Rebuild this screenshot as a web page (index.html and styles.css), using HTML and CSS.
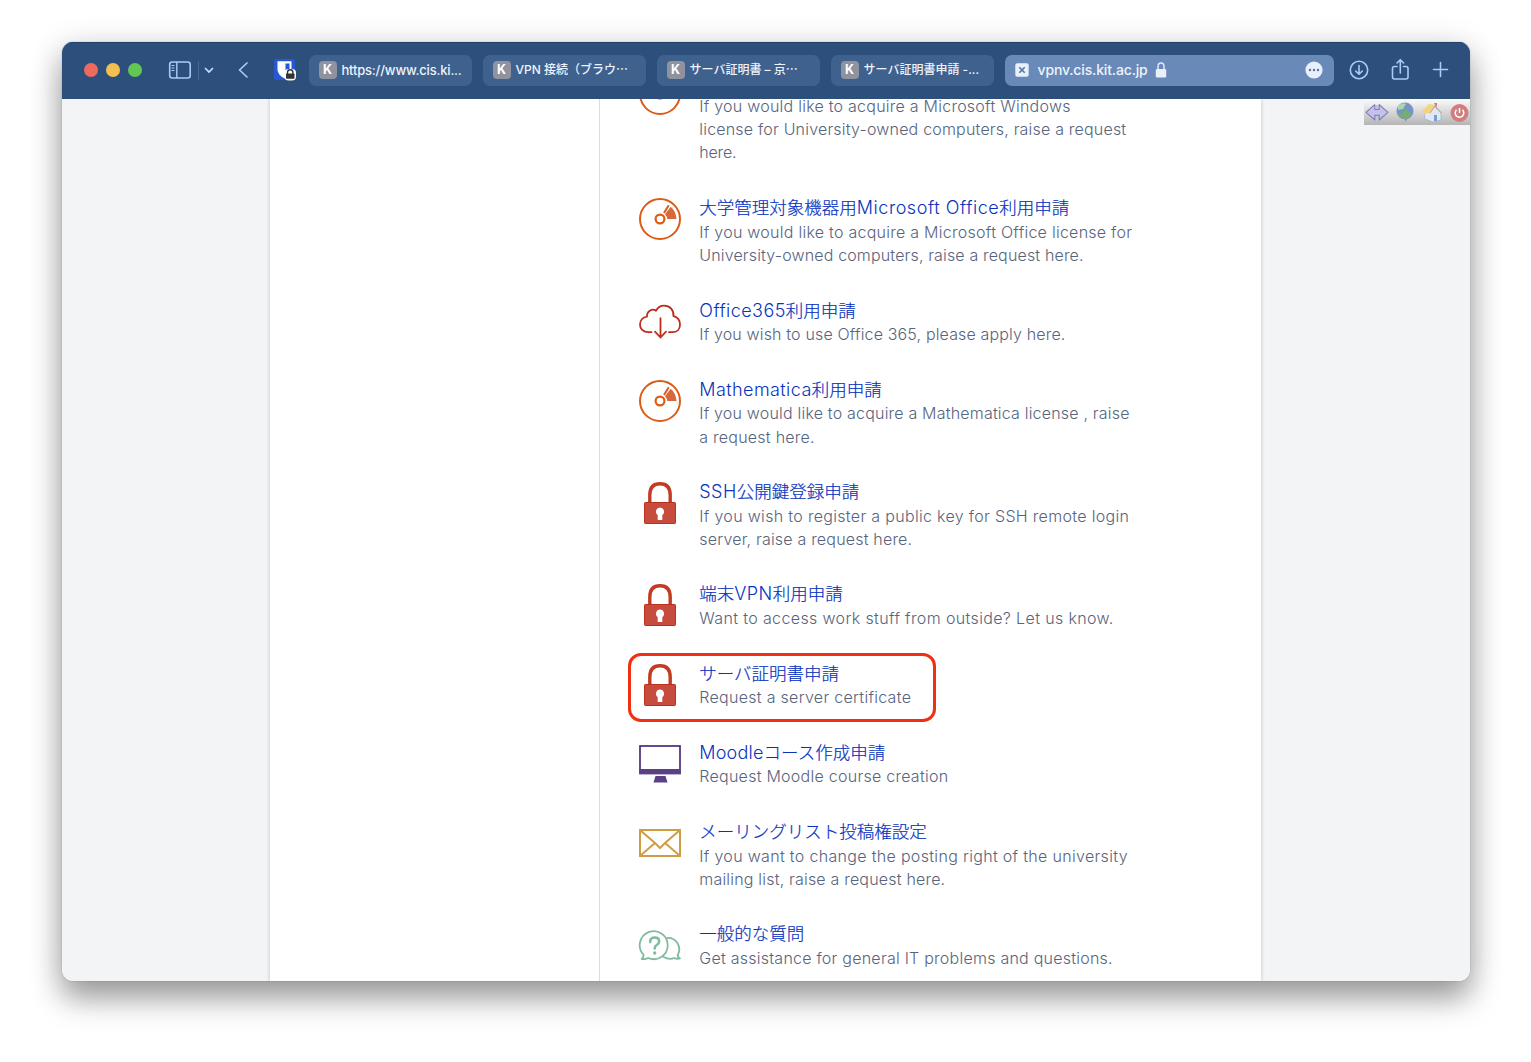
FILE: index.html
```html
<!DOCTYPE html>
<html lang="ja">
<head>
<meta charset="utf-8">
<title>vpnv.cis.kit.ac.jp</title>
<link rel="stylesheet" href="styles.css">
</head>
<body>
<svg class="defs" width="0" height="0">
  <defs>
    <symbol id="disc" viewBox="0 0 44 44">
      <g fill="none" stroke="#dc5c17" stroke-width="2">
        <circle cx="22" cy="22" r="20"/><circle cx="22" cy="22" r="4.400" stroke-width="2.200"/>
      </g>
      <path d="M27 17.300L32.700 9.700Q38 14 38.500 22H29.300Q29 19.500 27 17.300Z" fill="#d9673a"/>
      <path d="M26 16L30.700 8.200" stroke="#dc5c17" stroke-width="2"/>
    </symbol>
    <symbol id="lock" viewBox="0 0 44 44">
      <path d="M11.800 22V14Q11.800 2.700 22 2.700T32.200 14V22" fill="none" stroke="#c23b22" stroke-width="3.400"/>
      <rect x="6.500" y="21.500" width="31" height="21" rx=".8" fill="#c64d3e" stroke="#bd3019"/>
      <path d="M22 26.500a4.200 4.200 0 0 1 2.300 7.600V39H19.700V34.100A4.200 4.200 0 0 1 22 26.500Z" fill="#fff"/>
    </symbol>
  </defs>
</svg>
<div class="window">
  <header class="toolbar">
    <div class="lights"><i class="red"></i><i class="yellow"></i><i class="green"></i></div>
    <svg class="side" width="50" height="24" viewBox="0 0 50 24" fill="none" stroke="#a9cbfa">
      <rect x="1.700" y="4" width="20.500" height="16" rx="2.500" stroke-width="1.600"/>
      <path d="M8.800 4V20" stroke-width="1.400"/><path d="M3.500 7.500H6.500M3.500 10H6.500M3.500 12.500H6.500" />
      <path d="M30.500 3V22" stroke="#446693"/>
      <path d="M37.500 10.500L41 14L44.500 10.500" stroke="#c9deff" stroke-width="1.700" stroke-linecap="round"/>
    </svg>
    <svg class="back" width="12" height="18" viewBox="0 0 12 18"><path d="M10 2L2.500 9L10 16" fill="none" stroke="#a9cbfa" stroke-width="1.700" stroke-linecap="round" stroke-linejoin="round"/></svg>
    <svg class="shield" width="22" height="22" viewBox="0 0 22 22">
      <rect width="21" height="21" rx="2" fill="#2459d3"/>
      <path d="M3.500 2.200H17.500V11Q17 16 10.500 19.500Q4 16 3.500 11Z" fill="#fff"/><path d="M11.500 4.500H15.500V11Q15 14 11.500 16.500Z" fill="#2459d3"/>
      <rect x="10.500" y="10" width="11.500" height="11.500" rx="4" fill="#fff"/>
      <path d="M13.500 15V13.500a2.700 2.700 0 0 1 5.400 0V15" fill="none" stroke="#333" stroke-width="1.400"/><rect x="12" y="14.500" width="8.500" height="5.300" rx=".7" fill="#333"/>
    </svg>
    <nav class="tabs">
      <div class="tab"><b>K</b><span class="url">https://www.cis.ki...</span></div>
      <div class="tab"><b>K</b><span>VPN 接続（ブラウ<i>⋯</i></span></div>
      <div class="tab"><b>K</b><span>サーバ証明書 – 京<i>⋯</i></span></div>
      <div class="tab"><b>K</b><span>サーバ証明書申請 -...</span></div>
      <div class="tab active">
        <svg width="14" height="14" viewBox="0 0 14 14"><rect x=".3" y=".3" width="13.400" height="13.400" rx="2" fill="#e9effb"/><path d="M4.300 4.300L9.700 9.700M9.700 4.300L4.300 9.700" stroke="#53779f" stroke-width="1.600"/></svg>
        <span class="address">vpnv.cis.kit.ac.jp</span>
        <svg width="12" height="16" viewBox="0 0 12 16"><path d="M3 8V4.500a3 3.500 0 0 1 6 0V8" fill="none" stroke="#dfe9fa" stroke-width="1.500"/><rect x=".8" y="7" width="10.400" height="8.500" rx="1.300" fill="#e9effb"/></svg>
        <svg class="more" width="18" height="18" viewBox="0 0 18 18"><circle cx="9" cy="9" r="8.600" fill="#e9effb"/><g fill="#53779f"><circle cx="5" cy="9" r="1.200"/><circle cx="9" cy="9" r="1.200"/><circle cx="13" cy="9" r="1.200"/></g></svg>
      </div>
    </nav>
    <svg class="actions" width="104" height="24" viewBox="0 0 104 24" fill="none" stroke="#a9cbfa" stroke-width="1.600" stroke-linecap="round" stroke-linejoin="round">
      <circle cx="11" cy="12" r="8.700"/><path d="M11 7.500V16M7.700 13L11 16.200L14.300 13"/>
      <path d="M49 8.500H46.500Q44.500 8.500 44.500 10.500V19Q44.500 21 46.500 21H58Q60 21 60 19V10.500Q60 8.500 58 8.500H55.500M52.300 15V2M49 5L52.300 1.700L55.600 5"/>
      <path d="M85.500 11.500H99.500M92.500 4.500V18.500"/>
    </svg>
  </header>
  <main class="page">
    <div class="sheet">
      <div class="blank"></div>
      <div class="list">
        <article class="item">
          <svg class="icon"><use href="#disc"/></svg>
          <div>
          <p><span class="w25">If you would like to acquire a Microsoft Windows</span><br><span class="w20">license for University-owned computers, raise a request</span><br><span class="tight">here.</span></p></div>
        </article>
        <article class="item">
          <svg class="icon"><use href="#disc"/></svg>
          <div><h2>大学管理対象機器用<span class="latin wide">Microsoft Office</span>利用申請</h2>
          <p><span class="w26">If you would like to acquire a Microsoft Office license for</span><br><span class="w16">University-owned computers, raise a request here.</span></p></div>
        </article>
        <article class="item">
          <svg class="icon" viewBox="0 .8 44 44"><g fill="none" stroke="#bd2d1c" stroke-width="1.800" stroke-linecap="round" stroke-linejoin="round"><path d="M13.500 33H10.500C5 33 2 29.500 2 25.500C2 21 5 18 9 17.500C8.500 12.500 14 8.500 18 11.500C20 8 23 6.500 26 6.500C32 6.500 36 11 35.500 17C39.500 18 42 21.500 42 25.500C42 30 39 33 34.500 33H31"/><path d="M22.500 19V38M17 32.500L22.500 38.300L28 32.500"/></g></svg>
          <div><h2><span class="latin">Office365</span>利用申請</h2><p><span class="w16">If you wish to use Office 365, please apply here.</span></p></div>
        </article>
        <article class="item">
          <svg class="icon"><use href="#disc"/></svg>
          <div><h2><span class="latin">Mathematica</span>利用申請</h2><p><span class="w20">If you would like to acquire a Mathematica license , raise</span><br><span class="w25">a request here.</span></p></div>
        </article>
        <article class="item">
          <svg class="icon"><use href="#lock"/></svg>
          <div><h2><span class="latin">SSH</span>公開鍵登録申請</h2><p><span class="w32">If you wish to register a public key for SSH remote login</span><br><span class="w20">server, raise a request here.</span></p></div>
        </article>
        <article class="item">
          <svg class="icon"><use href="#lock"/></svg>
          <div><h2>端末<span class="latin">VPN</span>利用申請</h2><p><span class="w36">Want to access work stuff from outside? Let us know.</span></p></div>
        </article>
        <article class="item marked">
          <svg class="icon"><use href="#lock"/></svg>
          <div><h2>サーバ証明書申請</h2><p><span class="w29">Request a server certificate</span></p></div>
        </article>
        <article class="item">
          <svg class="icon" viewBox="0 0 44 44"><rect x="2" y="4" width="40" height="27.500" fill="#fff" stroke="#4b2b78" stroke-width="1.700"/><path d="M1.500 27H42.500V32H1.500ZM17.500 34H27.500L29.500 40.500H15.500Z" fill="#5b4183"/></svg>
          <div><h2><span class="latin close">Moodle</span>コース作成申請</h2><p><span class="w26">Request Moodle course creation</span></p></div>
        </article>
        <article class="item">
          <svg class="icon" viewBox="0 0 44 44" fill="none" stroke="#cf9d46" stroke-width="2"><rect x="2" y="9" width="40" height="26"/><path d="M2.500 9.500L17 22L22 27L27 22L41.500 9.500M2.500 34.500L17 22M41.500 34.500L27 22"/></svg>
          <div><h2>メーリングリスト投稿権設定</h2><p><span class="w32">If you want to change the posting right of the university</span><br><span class="w20">mailing list, raise a request here.</span></p></div>
        </article>
        <article class="item">
          <svg class="icon" viewBox="-.7 -.5 44 44" fill="none" stroke="#7fbb9d" stroke-width="1.800" stroke-linecap="round" stroke-linejoin="round"><path d="M3 35.500Q5 34 4.800 31.200A14 14 0 1 1 9.500 34.500Q6.500 36 3 35.500Z"/><path d="M28.500 14.300A11.500 11.500 0 0 1 39 31.500Q39 34 41.300 35Q38 36 35.500 34.500Q30.500 36.500 25 33.500"/><path d="M11.500 18.500V17.500Q12 14 16 14Q20.500 14 20.500 18Q20.500 20 18 21.500Q16 22.500 16 25" stroke-width="2.500"/><circle cx="16" cy="29.500" r=".8"/></svg>
          <div><h2>一般的な質問</h2><p><span class="w25">Get assistance for general IT problems and questions.</span></p></div>
        </article>
      </div>
    </div>
    <aside class="vpnbar">
      <svg width="105" height="26" viewBox="0 0 105 26">
        <path d="M2 13.300L10 5.500V10H11.500V6H14.500V10H16V5.500L24 13.300L16 21.100V16.600H14.500V20.600H11.500V16.600H10V21.100Z" fill="#c3c2ea"/>
        <path d="M10.800 10.500V5.700L2 13.300L10.800 21V16.200H15.200V21L24 13.300L15.200 5.700V10.500Z" fill="#c3c2ea" stroke="#7f7db5" stroke-width="1.100" stroke-linejoin="round"/>
        <circle cx="41" cy="12" r="8.500" fill="#7793c9"/><path d="M34 7Q38 3 42 5L39 10L34 11Z" fill="#acd4b0"/><path d="M33 14Q38 17 40 12V9L48 15L41 23V19Q35 20 33 14Z" fill="#76ad77"/>
        <path d="M60 13L68 6L77 13V21L69 23L61 20Z" fill="#dfe9f6" stroke="#9cb0ce" stroke-width=".7"/><path d="M58 12L65 5L71 6L66 14L60 15Z" fill="#f5d37f"/><path d="M66 14L71 7L77 14" fill="none" stroke="#c9a58e" stroke-width="1.100"/><path d="M70 4H73V8L71 6Z" fill="#d97b67"/><path d="M70 16H73V22H70Z" fill="#7d9cc9"/>
        <circle cx="95.500" cy="14" r="9" fill="#d17d7e"/><path d="M92.500 10.800A4.300 4.300 0 1 0 98.500 10.800M95.500 9V14" fill="none" stroke="#fff" stroke-width="1.500"/>
      </svg>
    </aside>
  </main>
</div>
</body>
</html>
```
FILE: styles.css
```css
*, *::after { box-sizing: border-box; }
body { margin: 0; height: 1062px; overflow: hidden; background: #fff; font-family: Inter, "Noto Sans CJK JP", sans-serif; }
.defs { position: absolute; }
.window { display: flex; flex-direction: column; width: 1408px; height: 939px; margin: 42px 0 0 61.500px; border-radius: 11px; overflow: hidden; box-shadow: 0 0 1px rgba(0,0,0,.5), 0 18px 30px rgba(0,0,0,.34), 0 4px 34px rgba(0,0,0,.14); }
.toolbar { display: flex; align-items: center; flex: none; height: 57px; padding-bottom: 2px; background: #2c4f7c; border-top: 1px solid #24436c; }
.lights { display: flex; gap: 8px; margin-left: 22px; }
.lights i { width: 14px; height: 14px; border-radius: 50%; }
.red { background: #ee6a5f; }
.yellow { background: #f5bf4f; }
.green { background: #62c655; }
.side { margin-left: 26.500px; }
.back { margin-left: 19px; }
.shield { margin-left: 25px; }
.tabs { display: flex; gap: 11px; margin-left: 12.500px; }
.tab { display: flex; align-items: center; width: 163px; height: 31px; padding-left: 10px; border-radius: 7px; background: #3f618e; color: #eef3fb; font-size: 12px; font-weight: 500; line-height: 18px; white-space: nowrap; }
.tab b { width: 18px; height: 18px; margin-right: 5px; border-radius: 4px; background: #8f929f; color: #fff; font-size: 12.500px; text-align: center; }
.tab i { font-style: normal; }
.tab .url { font-size: 13px; letter-spacing: -.2px; }
.active { width: 329px; background: #698ab8; }
.tab .address { margin: 0 7px 0 9px; font-size: 14px; letter-spacing: -.15px; }
.more { margin: 0 11px 0 auto; }
.actions { margin-left: 14px; }
.page { display: flex; position: relative; flex: 1; min-height: 0; overflow: hidden; background: #f3f4f6; }
.sheet { display: flex; width: 991.500px; margin-left: 208px; background: #fff; box-shadow: 0 0 4px rgba(0,0,0,.22); }
.blank { width: 330px; border-right: 1px solid #ddd; }
.list { flex: 1; padding-left: 38px; margin-top: -29px; }
.item { display: flex; position: relative; gap: 17.800px; margin-bottom: 30.500px; }
.item:first-child > div { padding: 24.800px 0 .800px; }
.icon { flex: none; width: 44px; height: 44px; margin-top: 2px; }
h2 { margin: 0; height: 25.600px; color: #0733c0; font-size: 17.500px; font-weight: 300; line-height: 25px; white-space: nowrap; -webkit-text-stroke: .2px; }
.latin { font-size: 18px; letter-spacing: .42px; -webkit-text-stroke: 0; }
.latin.wide { letter-spacing: .55px; }
.latin.close { letter-spacing: .2px; }
p { margin: 0; color: #57647d; font-size: 16px; font-weight: 300; line-height: 23.100px; white-space: nowrap; }
.tight { letter-spacing: -.19px; }
.w16 { letter-spacing: .155px; }
.w20 { letter-spacing: .195px; }
.w25 { letter-spacing: .243px; }
.w26 { letter-spacing: .26px; }
.w29 { letter-spacing: .29px; }
.w32 { letter-spacing: .32px; }
.w36 { letter-spacing: .365px; }
.marked::after { content: ""; position: absolute; left: -10px; top: -8px; width: 308px; height: 69px; border: 3px solid #f03010; border-radius: 13px; }
.vpnbar { position: absolute; right: 0; top: 0; width: 105.500px; height: 26px; background: linear-gradient(#fbfbfb, #b5b5b5); }
```
